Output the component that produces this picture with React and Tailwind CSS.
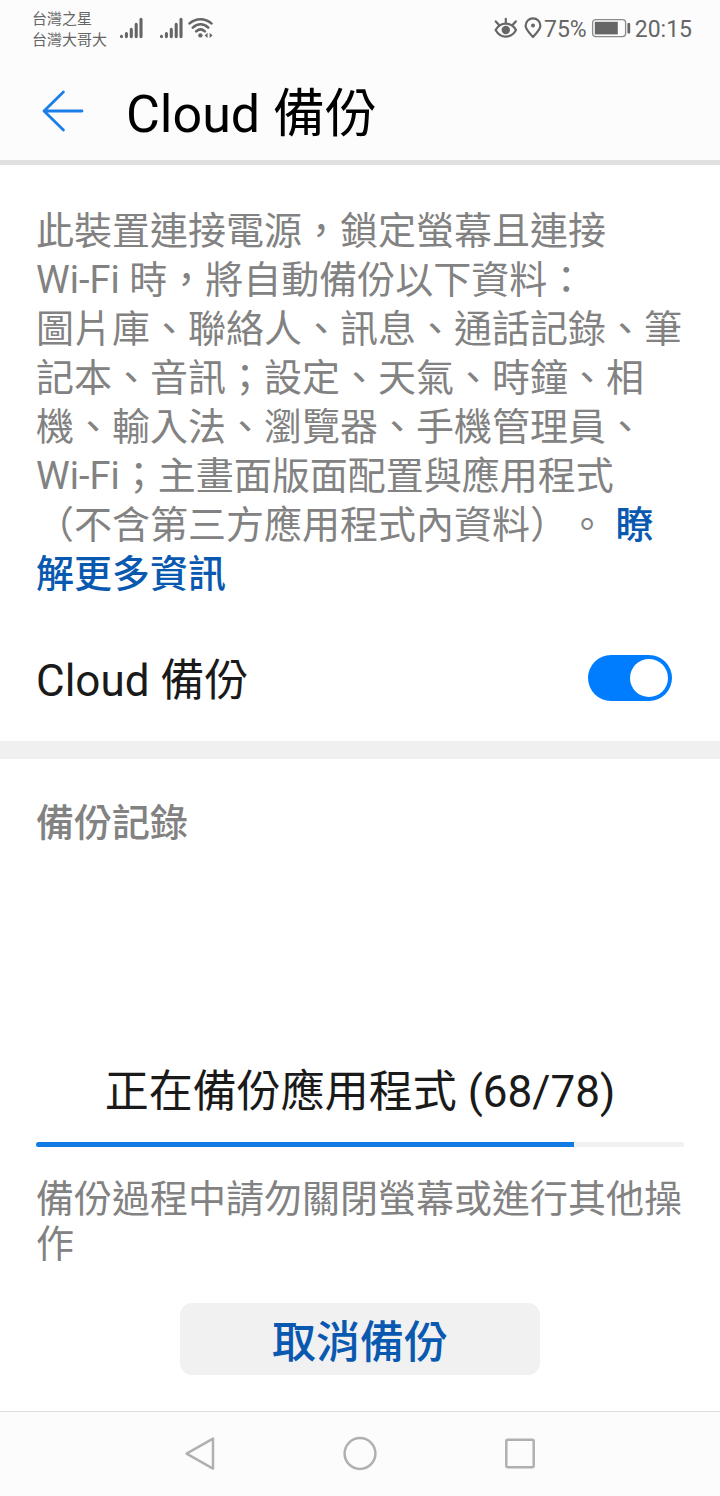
import { useState } from 'react';

const BACKUP = { done: 68, total: 78, percent: 83 };

function SignalIcon() {
  return (
    <svg viewBox="0 0 24 22" className="h-[22px] w-6" fill="none" stroke="#666" strokeWidth="3.1" strokeLinecap="round" aria-hidden="true">
      <path d="M2.5 19.2v.4M7.4 16.6v3M12.3 12.4v7.2M17.2 7.4v12.2M22 2.4v17.2" />
    </svg>
  );
}

function WifiIcon() {
  return (
    <svg viewBox="0 0 26 22" className="h-[22px] w-[26px]" fill="none" stroke="#666" strokeWidth="2.6" strokeLinecap="round" aria-hidden="true">
      <path d="M2.6 6.4C8.8.8 18.2.8 24.4 6.4M5.8 10.600c4.6-4.400 11-4.400 15.400 0M9.200 14.400c2.600-2.400 6-2.400 8.600 0" />
      <circle cx="13.400" cy="18.400" r="2.200" fill="#666" stroke="none" />
      <path d="M20.600 15.800v5.200l-3-2.600zM22.600 15.800v5.200l3-2.600z" fill="#666" stroke="none" />
    </svg>
  );
}

function EyeIcon() {
  return (
    <svg viewBox="0 0 24 22" className="h-[22px] w-6" fill="none" stroke="#666" strokeWidth="2.200" strokeLinecap="round" aria-hidden="true">
      <path d="M1.600 13C6.400 4.600 17.200 4.600 22 13 17.200 21.800 6.400 21.800 1.600 13z" />
      <circle cx="11.800" cy="13" r="4.200" fill="#666" stroke="none" />
      <path d="M11.800 1.800v4M1.800 4.400l3 3.400M21.800 4.400l-3 3.400" />
    </svg>
  );
}

function PinIcon() {
  return (
    <svg viewBox="0 0 18 22" className="h-[22px] w-[18px]" fill="none" stroke="#666" strokeWidth="2.200" strokeLinejoin="round" aria-hidden="true">
      <path d="M9 20C6.400 17 1.600 12.600 1.600 8.800a7.400 7.400 0 0 1 14.800 0C16.400 12.600 11.600 17 9 20z" />
      <circle cx="9" cy="8.600" r="2" fill="#666" stroke="none" />
    </svg>
  );
}

function BatteryIcon() {
  return (
    <svg viewBox="0 0 40 20" className="h-5 w-10" aria-hidden="true">
      <rect x="1.600" y="1.600" width="33" height="17" rx="3" fill="none" stroke="#8a8a8a" strokeWidth="1.300" />
      <rect x="3.800" y="3.800" width="23" height="12.600" fill="#666" />
      <rect x="36.400" y="5" width="2.800" height="10.600" rx="1" fill="#666" />
    </svg>
  );
}

function StatusBar() {
  return (
    <div className="flex h-14 items-center justify-between pl-8 pr-7 text-[#666]">
      <div className="flex items-center">
        <div className="w-[87px] pt-1 text-[15px] leading-[21px] whitespace-nowrap">
          <p>台灣之星</p>
          <p>台灣大哥大</p>
        </div>
        <SignalIcon />
        <span className="w-4" />
        <SignalIcon />
        <span className="w-1" />
        <WifiIcon />
      </div>
      <div className="flex items-center text-[23px] leading-6">
        <EyeIcon />
        <span className="w-1.5" />
        <PinIcon />
        <span className="mr-1 pl-0.5 pt-1">75%</span>
        <BatteryIcon />
        <span className="ml-1 pt-1">20:15</span>
      </div>
    </div>
  );
}

function Switch({ id, checked, onChange }) {
  return (
    <span className="relative flex">
      <input
        id={id}
        type="checkbox"
        role="switch"
        checked={checked}
        onChange={(e) => onChange(e.target.checked)}
        className="peer h-[46px] w-[84px] cursor-pointer appearance-none rounded-full bg-gray-300 checked:bg-[#007dff]"
      />
      <span className="pointer-events-none absolute left-1 top-1 size-[38px] rounded-full bg-white peer-checked:left-auto peer-checked:right-1" />
    </span>
  );
}

function NavBar() {
  return (
    <nav className="flex h-[85px] items-center justify-center gap-28 border-t border-[#dedede] bg-[#fcfcfc]">
      <button type="button" aria-label="Back" className="flex size-12 items-center justify-center">
        <svg viewBox="0 0 36 36" className="size-9" fill="none" stroke="#b0b0b0" strokeWidth="2.500" strokeLinejoin="round">
          <path d="M31 2.600v30L4.600 17.600z" />
        </svg>
      </button>
      <button type="button" aria-label="Home" className="flex size-12 items-center justify-center">
        <svg viewBox="0 0 36 36" className="size-9" fill="none" stroke="#b0b0b0" strokeWidth="2.500">
          <circle cx="18" cy="17.500" r="15.400" />
        </svg>
      </button>
      <button type="button" aria-label="Recents" className="flex size-12 items-center justify-center">
        <svg viewBox="0 0 36 36" className="size-9" fill="none" stroke="#b0b0b0" strokeWidth="2.500">
          <rect x="4.300" y="3.800" width="27.400" height="27.400" rx="1.500" />
        </svg>
      </button>
    </nav>
  );
}

export default function App() {
  const [enabled, setEnabled] = useState(true);

  return (
    <div lang="zh-TW" className="flex min-h-screen flex-col bg-white font-['Roboto','Noto_Sans_CJK_TC',sans-serif] text-[#1a1a1a] [text-spacing-trim:space-all]">
      <div className="border-b-5 border-[#e1e1e1] bg-[#fcfcfc]">
        <StatusBar />
        <header className="flex h-[104px] items-center gap-10 pl-10 pt-2">
          <button type="button" aria-label="Back" className="flex">
            <svg viewBox="0 0 46 46" className="size-[46px]" fill="none" stroke="#1a7fe8" strokeWidth="2.800" strokeLinecap="round" strokeLinejoin="round">
              <path d="M42 22H4M23.400 3L4 22l19.400 19" />
            </svg>
          </button>
          <h1 className="pt-1.5 text-[52px] leading-[64px] text-black">Cloud 備份</h1>
        </header>
      </div>

      <main className="flex flex-1 flex-col">
        <section className="px-9 pt-[42px]">
          <p className="text-[38px] leading-[49px] text-[#828282]">
            此裝置連接電源，鎖定螢幕且連接 <span className="whitespace-nowrap">Wi-Fi</span> 時，將自動備份以下資料：
            <br />
            圖片庫、聯絡人、訊息、通話記錄、筆記本、音訊；設定、天氣、時鐘、相機、輸入法、瀏覽器、手機管理員、Wi-Fi；主畫面版面配置與應用程式（不含第三方應用程式內資料）。{' '}
            <a href="#more" className="font-medium text-[#0a59b0]">瞭解更多資訊</a>
          </p>
          <div className="flex h-[142px] items-center justify-between pr-3 pt-4">
            <label htmlFor="cloud-backup" className="pt-1.5 text-[44px] leading-[56px]">Cloud 備份</label>
            <Switch id="cloud-backup" checked={enabled} onChange={setEnabled} />
          </div>
        </section>

        <section className="flex flex-1 flex-col border-t-18 border-[#f0f0f0] px-9 pb-9 pt-10">
          <h2 className="text-[38px] font-medium leading-[49px] text-[#828282]">備份記錄</h2>

          <div className="mt-auto flex flex-col">
            <p className="text-center text-[44px] leading-[56px]">
              正在備份應用程式 ({BACKUP.done}/{BACKUP.total})
            </p>
            <div
              role="progressbar"
              aria-label="備份進度"
              aria-valuenow={BACKUP.done}
              aria-valuemin={0}
              aria-valuemax={BACKUP.total}
              className="mt-[22px] h-[5px] overflow-hidden rounded-full bg-[#f1f1f1]"
            >
              <div className="h-full bg-[#137be4]" style={{ width: `${BACKUP.percent}%` }} />
            </div>
            <p className="mt-[30px] text-[38px] leading-[45px] text-[#828282]">
              備份過程中請勿關閉螢幕或進行其他操作
            </p>
            <button type="button" className="mt-9 h-[72px] w-[360px] self-center rounded-xl bg-[#f1f1f1] pt-2 text-[44px] font-medium leading-[56px] text-[#0a59b0]">
              取消備份
            </button>
          </div>
        </section>
      </main>

      <NavBar />
    </div>
  );
}
